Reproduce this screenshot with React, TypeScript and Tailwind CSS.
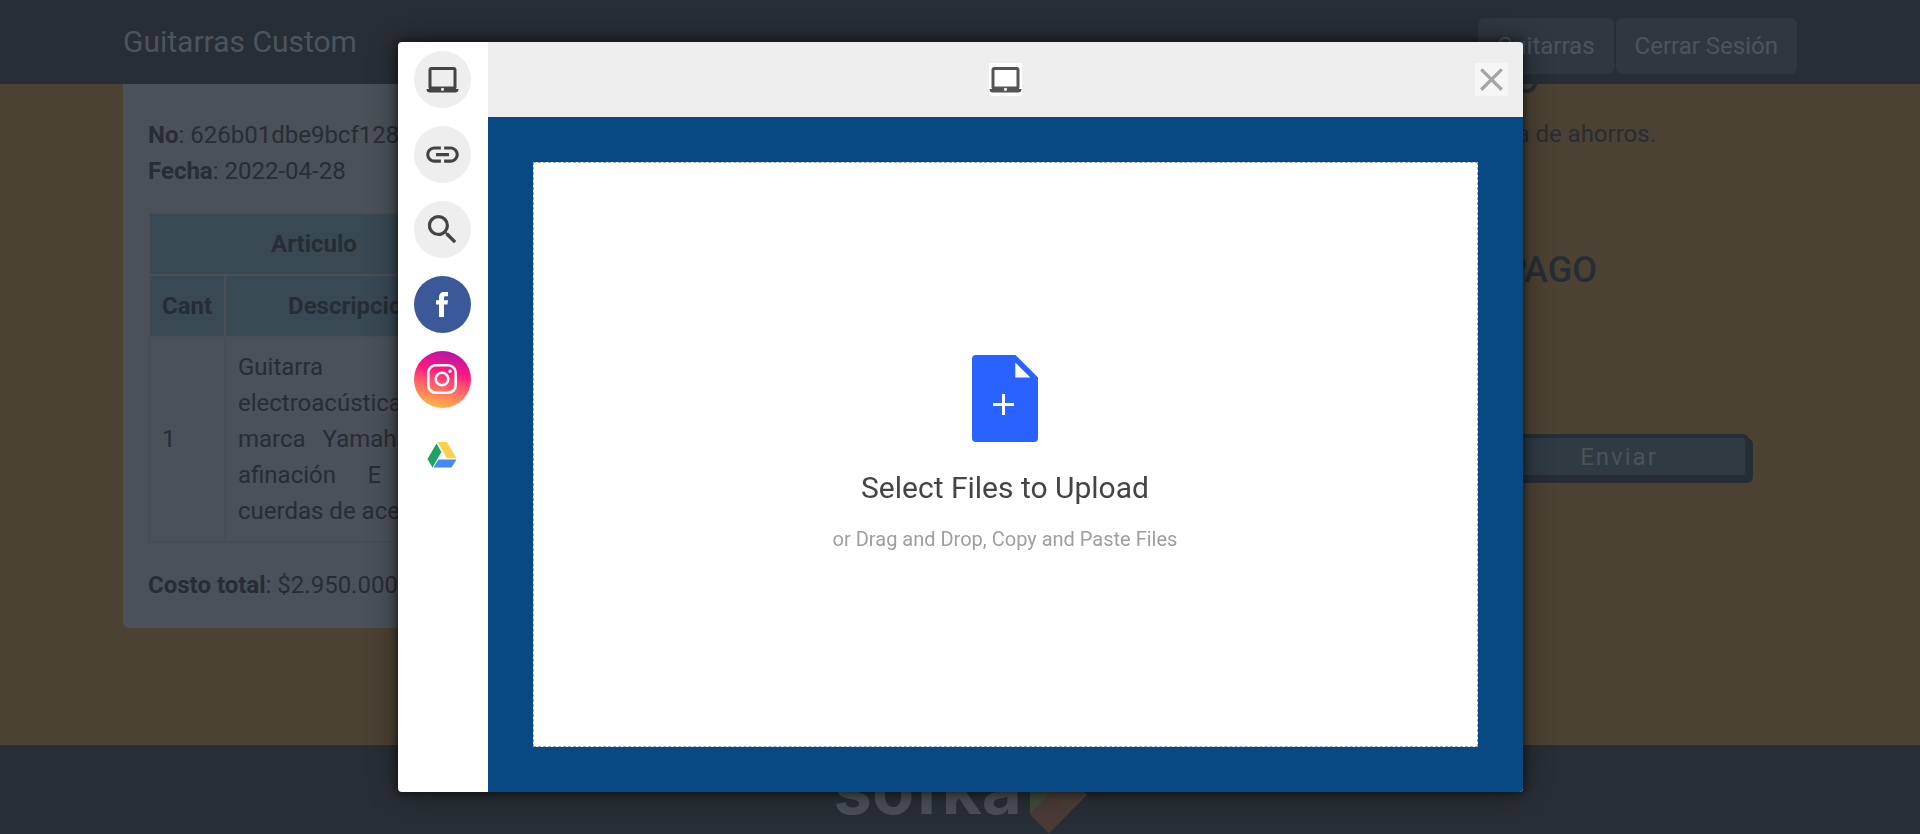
import type { ReactNode } from 'react';
import { MdClose, MdLink, MdSearch } from 'react-icons/md';

function LaptopIcon() {
  return (
    <svg width="33" height="26" viewBox="0 0 32 26" fill="currentColor" aria-hidden="true">
      <path
        fillRule="evenodd"
        d="M5 0h22a3 3 0 0 1 3 3v17a3 3 0 0 1-.6 2H32a3.500 3.500 0 0 1-3.500 3.500h-25A3.500 3.500 0 0 1 0 22h2.600A3 3 0 0 1 2 20V3a3 3 0 0 1 3-3Zm0 3v16.500h22V3H5Zm11 17.700a1.600 1.600 0 1 0 0 3.200 1.600 1.600 0 0 0 0-3.200Z"
      />
    </svg>
  );
}

function FacebookIcon() {
  return (
    <svg width="13" height="25" viewBox="0 0 13 25" fill="white" aria-hidden="true">
      <path d="M3 25V12.600H0V8.300h3V5.500C3 2 4.800 0 8.300 0H12v4.200H9.500C8.200 4.200 8 4.800 8 5.900v2.400h4l-.5 4.300H8V25Z" />
    </svg>
  );
}

function InstagramIcon() {
  return (
    <svg width="31" height="31" viewBox="0 0 31 31" fill="none" stroke="white" strokeWidth="2.600" aria-hidden="true">
      <rect x="1.300" y="1.300" width="27.400" height="27.400" rx="7.500" />
      <circle cx="15" cy="15" r="6.300" />
      <circle cx="23" cy="7.200" r="1.800" fill="white" stroke="none" />
    </svg>
  );
}

function DriveIcon() {
  return (
    <svg width="31" height="26" viewBox="0 0 31 26" aria-hidden="true">
      <path d="M10.500 0H20l9.500 16.300H20Z" fill="#ffd04b" />
      <path d="M9.500 1.500 14.400 10 5.500 25.500.500 17Z" fill="#1ea362" />
      <path d="M11.300 17.500h18.200l-5 8H6.500Z" fill="#4688f4" />
    </svg>
  );
}

function FileIcon() {
  return (
    <svg width="66" height="87" viewBox="0 0 66 87" aria-hidden="true">
      <path
        fillRule="evenodd"
        fill="#2962ff"
        d="M4 0h39.500L66 22.500V83a4 4 0 0 1-4 4H4a4 4 0 0 1-4-4V4a4 4 0 0 1 4-4Zm39.300 7.500v15h15Z"
      />
      <path d="M21 49.500h21M31.500 39v21" stroke="white" strokeWidth="3" />
    </svg>
  );
}

function SourceButton({ label, tone, children }: { label: string; tone: string; children: ReactNode }) {
  return (
    <li className="flex h-[75px] items-center justify-center">
      <button
        type="button"
        aria-label={label}
        className={`flex size-[57px] items-center justify-center rounded-full text-[#444] ${tone}`}
      >
        {children}
      </button>
    </li>
  );
}

function UploadDialog() {
  return (
    <div className="fixed inset-0 z-10 flex items-center justify-center">
      <div
        role="dialog"
        aria-label="Select Files to Upload"
        className="flex h-[750px] max-h-full w-[1125px] max-w-full overflow-hidden rounded-sm bg-white shadow-[0_0_30px_rgba(0,0,0,0.45),0_0_8px_rgba(0,0,0,0.6)]"
      >
        <ul className="w-[90px] shrink-0">
          <SourceButton label="My Device" tone="bg-[#eee]"><LaptopIcon /></SourceButton>
          <SourceButton label="Link" tone="bg-[#eee]"><MdLink size={39} /></SourceButton>
          <SourceButton label="Web Search" tone="bg-[#eee]"><MdSearch size={39} /></SourceButton>
          <SourceButton label="Facebook" tone="bg-[#3b5998]"><FacebookIcon /></SourceButton>
          <SourceButton label="Instagram" tone="bg-[linear-gradient(192deg,#a818b0_4%,#ff1580_36%,#ff5a6c_58%,#ffb545_92%)]">
            <InstagramIcon />
          </SourceButton>
          <SourceButton label="Google Drive" tone="bg-white"><DriveIcon /></SourceButton>
        </ul>
        <div className="flex grow flex-col bg-[#084984]">
          <div className="grid h-[75px] shrink-0 grid-cols-[1fr_auto_1fr] items-center bg-[#eee] px-[15px]">
            <span className="col-start-2 flex size-[33px] items-center justify-center bg-white text-[#555]">
              <LaptopIcon />
            </span>
            <button
              type="button"
              aria-label="Close"
              className="flex size-[33px] items-center justify-center justify-self-end bg-[#f6f6f6] text-[#a5a5a5]"
            >
              <MdClose size={39} className="shrink-0" />
            </button>
          </div>
          <div className="flex grow p-[45px]">
            <button
              type="button"
              className="flex grow flex-col items-center justify-center border border-dashed border-[#aaa] bg-white pb-1"
            >
              <FileIcon />
              <span className="mt-[23px] text-[30px] leading-[45px] text-[#444]">Select Files to Upload</span>
              <span className="mt-[17px] text-[20px] leading-6 text-[#9e9e9e]">or Drag and Drop, Copy and Paste Files</span>
            </button>
          </div>
        </div>
      </div>
    </div>
  );
}

const headCell = 'border-2 border-[#4a4f56] bg-[#384954] px-3 py-3 text-center font-bold';
const bodyCell = 'border-2 border-[#484d54] px-3 pt-[11px] pb-3';

export default function App() {
  return (
    <div className="flex min-h-screen flex-col bg-[#4c4233] font-[Roboto,'Liberation_Sans',sans-serif] text-[24px] leading-9 text-[#272d34]">
      <header className="relative z-[1] bg-[#282e35] text-[#4d545b]">
        <div className="mx-auto flex h-[84px] max-w-[1674px] items-center justify-between">
          <a href="#inicio" className="text-[30px]">Guitarras Custom</a>
          <nav className="mt-2 flex gap-0.5">
            <a href="#guitarras" className="rounded-md bg-[#31373f] px-[19px] py-2.5">Guitarras</a>
            <a href="#salir" className="rounded-md bg-[#31373f] px-[19px] py-2.5">Cerrar Sesión</a>
          </nav>
        </div>
      </header>

      <main className="mx-auto flex w-full max-w-[1674px] grow items-start justify-between">
        <section className="w-[400px] rounded-b-md bg-[#4b5158] px-[25px] pt-[33px] pb-[25px]">
          <p><b>No</b>: 626b01dbe9bcf128</p>
          <p><b>Fecha</b>: 2022-04-28</p>
          <table className="mt-[23px] w-[332px] table-fixed border-collapse">
            <colgroup>
              <col className="w-[76px]" />
              <col />
            </colgroup>
            <thead>
              <tr><th colSpan={2} className={headCell}>Articulo</th></tr>
              <tr>
                <th className={headCell}>Cant</th>
                <th className={headCell}>Descripcion</th>
              </tr>
            </thead>
            <tbody>
              <tr>
                <td className={bodyCell}>1</td>
                <td className={`${bodyCell} text-justify`}>
                  Guitarra electroacústica marca Yamaha con afinación E junto cuerdas de acero
                </td>
              </tr>
            </tbody>
          </table>
          <p className="mt-6"><b>Costo total</b>: $2.950.000</p>
        </section>

        <section className="mr-12 w-[260px]">
          <h2 className="-mt-6 mr-[210px] flex justify-end text-[36px] leading-[43px] font-medium">PAGO</h2>
          <p className="mt-[13px] mr-[93px] text-right whitespace-nowrap">a de ahorros.</p>
          <h2 className="mt-[97px] mr-[152px] text-right text-[36px] leading-[43px] font-medium">PAGO</h2>
          <button
            type="button"
            className="mt-[142px] flex h-[45px] w-full items-center justify-center rounded-md border-4 border-[#272d34] bg-[#303a43] tracking-[2px] text-[#4b5259] shadow-[4px_4px_0_#272d34]"
          >
            Enviar
          </button>
        </section>
      </main>

      <footer className="flex h-[89px] items-end justify-center gap-2 overflow-hidden bg-[#282e35]">
        <span className="font-[Inter,sans-serif] text-[69px] leading-[90px] font-bold text-[#4b4f58]">sofka</span>
        <svg width="57" height="60" viewBox="0 0 57 60" aria-hidden="true">
          <path d="M0 0h38l19 21-38 38L0 40Z" fill="#4b3f38" />
          <path d="M0 0h38L0 40Z" fill="#424b38" />
          <path d="M0 40 19 21l19 19-19 19Z" fill="#4b3b38" />
        </svg>
      </footer>
      <UploadDialog />
    </div>
  );
}
